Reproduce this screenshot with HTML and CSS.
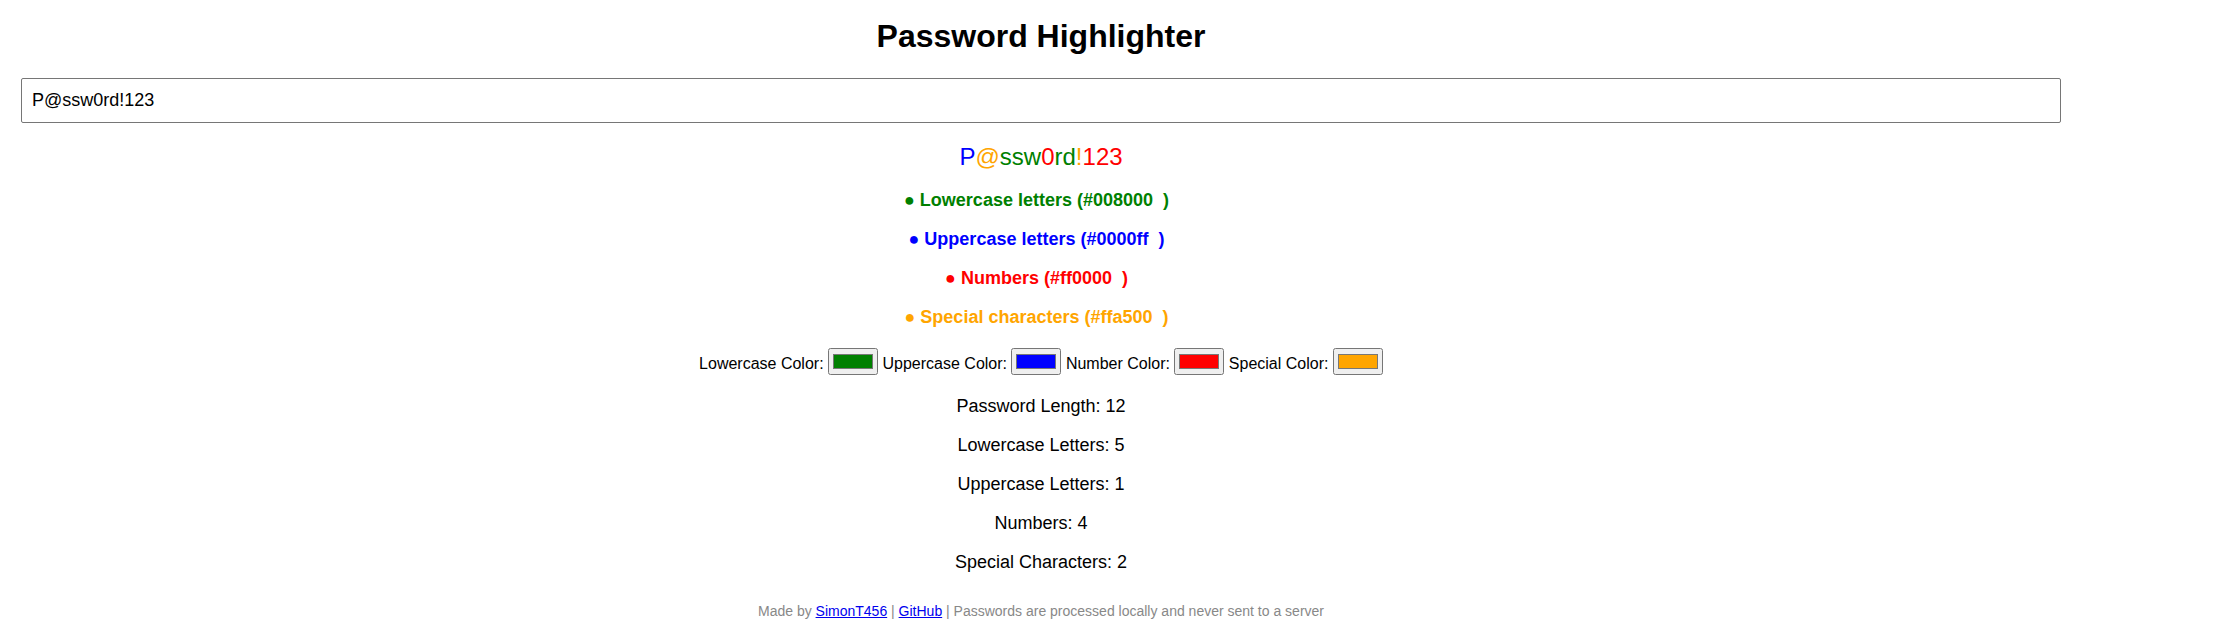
FILE: index.html
```html
<!DOCTYPE html>
<html lang="en">
<head>
<meta charset="utf-8">
<title>Password Highlighter</title>
<link rel="stylesheet" href="styles.css">
</head>
<body>
<div class="page">
  <h1 class="title">Password Highlighter</h1>
  <input class="pw-input" type="text" value="P@ssw0rd!123">
  <div class="highlight"><span class="c-up">P</span><span class="c-sp">@</span><span class="c-low">ssw</span><span class="c-num">0</span><span class="c-low">rd</span><span class="c-sp">!</span><span class="c-num">123</span></div>
  <div class="legend">
    <p class="legend-item c-low">● Lowercase letters (#008000&nbsp; )</p>
    <p class="legend-item c-up">● Uppercase letters (#0000ff&nbsp; )</p>
    <p class="legend-item c-num">● Numbers (#ff0000&nbsp; )</p>
    <p class="legend-item c-sp">● Special characters (#ffa500&nbsp; )</p>
  </div>
  <div class="pickers">
    <label>Lowercase Color: <input type="color" value="#008000"></label>
    <label>Uppercase Color: <input type="color" value="#0000ff"></label>
    <label>Number Color: <input type="color" value="#ff0000"></label>
    <label>Special Color: <input type="color" value="#ffa500"></label>
  </div>
  <div class="stats">
    <p class="stat">Password Length: 12</p>
    <p class="stat">Lowercase Letters: 5</p>
    <p class="stat">Uppercase Letters: 1</p>
    <p class="stat">Numbers: 4</p>
    <p class="stat">Special Characters: 2</p>
  </div>
  <footer class="footer">Made by <a href="#">SimonT456</a> | <a href="#">GitHub</a> | Passwords are processed locally and never sent to a server</footer>
</div>
</body>
</html>
```
FILE: styles.css
```css
html, body {
  margin: 0;
  padding: 0;
  background: #ffffff;
}
body {
  font-family: "Liberation Sans", Arial, sans-serif;
  color: #000000;
}
.page {
  width: 2040px;
  margin-left: 21px;
  text-align: center;
  display: flex;
  flex-direction: column;
  align-items: center;
}
.title {
  font-size: 32px;
  font-weight: bold;
  line-height: 37px;
  margin: 18px 0 23px;
}
.pw-input {
  box-sizing: border-box;
  width: 2040px;
  height: 45px;
  padding: 0 10px;
  font-family: "Liberation Sans", Arial, sans-serif;
  font-size: 18px;
  color: #000000;
  border: 1px solid #767676;
  border-radius: 2px;
  margin: 0;
  outline: none;
}
.highlight {
  font-size: 24px;
  line-height: 28px;
  margin-top: 19.5px;
}
.c-low { color: #008000; }
.c-up { color: #0000ff; }
.c-num { color: #ff0000; }
.c-sp { color: #ffa500; }
.legend {
  display: flex;
  flex-direction: column;
  align-items: center;
  gap: 18px;
  margin-top: 19.7px;
}
.legend-item {
  margin: 0;
  padding-right: 9px;
  font-size: 18px;
  font-weight: bold;
  line-height: 21px;
}
.pickers {
  margin-top: 20.1px;
  font-size: 16px;
  line-height: 18px;
}
.pickers input {
  vertical-align: baseline;
}
.stats {
  display: flex;
  flex-direction: column;
  align-items: center;
  gap: 18px;
  margin-top: 20.5px;
}
.stat {
  margin: 0;
  font-size: 18px;
  line-height: 21px;
}
.footer {
  margin-top: 30.2px;
  font-size: 14px;
  line-height: 16px;
  color: #888888;
}
.footer a {
  color: #0000ee;
}
```
